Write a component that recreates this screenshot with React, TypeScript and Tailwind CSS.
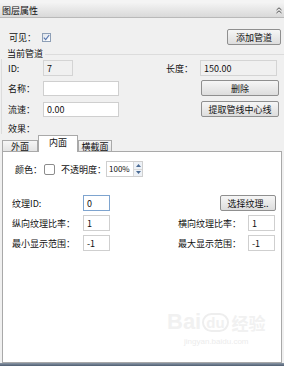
import React from 'react';

const font = { fontFamily: '"Noto Sans CJK SC", "Liberation Sans", sans-serif' };

function Btn({ label, className = '' }: { label: string; className?: string }) {
  return (
    <div
      className={`flex items-center justify-center rounded-[2px] border border-[#8f8f8f] bg-gradient-to-b from-[#f6f6f6] to-[#dddddd] text-[9px] leading-none text-[#111] ${className}`}
    >
      {label}
    </div>
  );
}

function Field({ value = '', className = '', disabled = false, focus = false }: { value?: string; className?: string; disabled?: boolean; focus?: boolean }) {
  return (
    <div
      className={`flex items-center border pl-[3px] text-[9px] leading-none text-[#111] ${
        disabled ? 'border-[#d4d4d4] bg-[#f0f0f0]' : focus ? 'border-[#7ea4cf] bg-white' : 'border-[#cfcfcf] bg-white'
      } ${className}`}
    >
      {value}
    </div>
  );
}

function Check({ checked = false, className = '' }: { checked?: boolean; className?: string }) {
  return (
    <div className={`flex items-center justify-center border border-[#8e9fb6] bg-gradient-to-br from-[#dfe4ea] to-white ${className}`}>
      {checked && (
        <svg width="7" height="7" viewBox="0 0 7 7">
          <path d="M0.8 3.6 L2.7 5.6 L6.2 1" fill="none" stroke="#5a78b0" strokeWidth="1.2" />
        </svg>
      )}
    </div>
  );
}

export default function App() {
  return (
    <div className="relative flex h-[366px] w-[284px] flex-col overflow-hidden bg-[#f0f0f0] text-[#111]" style={font}>
      {/* title bar */}
      <div className="flex h-[18px] items-center justify-between border-b border-[#b9b9b9] border-t-[3px] border-t-[#f4f4f4] bg-gradient-to-b from-[#f3f3f3] to-[#d9d9d9] pl-[2px] pr-[2px]">
        <span className="text-[9px] leading-none">图层属性</span>
        <svg width="6" height="7" viewBox="0 0 6 7">
          <path d="M0.5 3 L3 0.8 L5.5 3 M0.5 6 L3 3.8 L5.5 6" fill="none" stroke="#555" strokeWidth="1" />
        </svg>
      </div>

      {/* visible + add */}
      <div className="mt-[11px] flex h-[16px] items-center pr-[3px]">
        <span className="ml-[9px] w-[33px] text-[9px] leading-none">可见：</span>
        <Check checked className="h-[9px] w-[9px]" />
        <div className="flex-1" />
        <Btn label="添加管道" className="h-[16px] w-[54px]" />
      </div>

      {/* group label */}
      <div className="mt-[2px] flex h-[12px] items-center">
        <span className="ml-[7px] text-[9px] leading-none">当前管道</span>
        <div className="ml-[2px] mt-[2px] h-px flex-1 bg-[#dcdcdc]" />
      </div>

      <div className="ml-[1px] flex flex-col border-l border-[#dcdcdc]">
        {/* ID row */}
        <div className="mt-[1px] flex h-[16px] items-center">
          <span className="ml-[6px] w-[35px] text-[9px] leading-none">ID:</span>
          <Field value="7" disabled className="h-[16px] w-[30px]" />
          <span className="ml-[93px] w-[34px] text-[9px] leading-none">长度：</span>
          <Field value="150.00" disabled className="h-[16px] w-[77px]" />
        </div>

        {/* name row */}
        <div className="mt-[4px] flex h-[16px] items-center">
          <span className="ml-[6px] w-[35px] text-[9px] leading-none">名称：</span>
          <Field className="mt-[1px] h-[15px] w-[76px]" />
          <div className="flex-1" />
          <Btn label="删除" className="mr-[5px] h-[16px] w-[78px]" />
        </div>

        {/* speed row */}
        <div className="mt-[5px] flex h-[16px] items-center">
          <span className="ml-[6px] w-[35px] text-[9px] leading-none">流速：</span>
          <Field value="0.00" className="h-[15px] w-[76px]" />
          <div className="flex-1" />
          <Btn label="提取管线中心线" className="mr-[5px] h-[16px] w-[78px]" />
        </div>

        {/* effect */}
        <div className="mt-[5px] flex h-[12px] items-center">
          <span className="ml-[6px] text-[9px] leading-none">效果：</span>
        </div>
      </div>

      {/* tabs */}
      <div className="mt-[1px] flex h-[16px] items-end pl-[2px]">
        <div className="flex h-[11px] w-[36px] items-center justify-center border border-b-0 border-[#a9a9a9] bg-gradient-to-b from-[#f6f6f6] to-[#e4e4e4] text-[9px] leading-none">
          外面
        </div>
        <div className="relative z-10 -mb-px flex h-[17px] w-[40px] items-center justify-center border border-b-0 border-[#a9a9a9] bg-white pb-[3px] text-[9px] leading-none">
          内面
        </div>
        <div className="flex h-[11px] w-[34px] items-center justify-center border border-b-0 border-[#a9a9a9] bg-gradient-to-b from-[#f6f6f6] to-[#e4e4e4] text-[9px] leading-none">
          横截面
        </div>
      </div>

      {/* tab panel */}
      <div className="ml-[2px] mr-[2px] flex h-[212px] flex-col border border-[#a9a9a9] bg-white">
        {/* colour row */}
        <div className="mt-[9px] flex h-[16px] items-center">
          <span className="ml-[12px] w-[29px] text-[9px] leading-none">颜色：</span>
          <div className="h-[11px] w-[11px] rounded-[2px] border border-[#8c8c8c] bg-white" />
          <span className="ml-[6px] w-[45px] text-[9px] leading-none">不透明度：</span>
          <div className="flex h-[16px] w-[37px] border border-[#cfcfcf] bg-white">
            <span className="flex flex-1 items-center pl-[2px] text-[8px] leading-none">100%</span>
            <div className="flex w-[9px] flex-col border-l border-[#d8d8d8]">
              <div className="flex flex-1 items-center justify-center bg-[#eef2f7]">
                <svg width="5" height="3" viewBox="0 0 5 3">
                  <path d="M0 3 L2.5 0 L5 3 Z" fill="#4a6a94" />
                </svg>
              </div>
              <div className="flex flex-1 items-center justify-center border-t border-[#d8d8d8] bg-[#eef2f7]">
                <svg width="5" height="3" viewBox="0 0 5 3">
                  <path d="M0 0 L2.5 3 L5 0 Z" fill="#4a6a94" />
                </svg>
              </div>
            </div>
          </div>
        </div>

        {/* texture id */}
        <div className="mt-[18px] flex h-[16px] items-center">
          <span className="ml-[9px] w-[71px] text-[9px] leading-none">纹理ID:</span>
          <Field value="0" focus className="h-[16px] w-[27px]" />
          <div className="flex-1" />
          <Btn label="选择纹理.." className="mr-[5px] h-[16px] w-[56px]" />
        </div>

        {/* ratios */}
        <div className="mt-[4px] flex h-[16px] items-center">
          <span className="ml-[9px] w-[71px] text-[9px] leading-none">纵向纹理比率：</span>
          <Field value="1" className="h-[16px] w-[27px]" />
          <span className="ml-[68px] w-[70px] text-[9px] leading-none">横向纹理比率：</span>
          <Field value="1" className="h-[16px] w-[27px]" />
        </div>

        {/* ranges */}
        <div className="mt-[4px] flex h-[16px] items-center">
          <span className="ml-[9px] w-[71px] text-[9px] leading-none">最小显示范围：</span>
          <Field value="-1" className="h-[16px] w-[27px]" />
          <span className="ml-[68px] w-[70px] text-[9px] leading-none">最大显示范围：</span>
          <Field value="-1" className="h-[16px] w-[27px]" />
        </div>
      </div>

      <div className="flex-1 bg-gradient-to-b from-[#8a97a6] to-[#4f5e72]" />

      {/* watermark */}
      <div className="pointer-events-none absolute left-[167px] top-[311px] flex flex-col items-center" style={{ fontFamily: '"Liberation Sans", "Noto Sans CJK SC", sans-serif' }}>
        <div className="flex items-center text-[22px] font-bold leading-none text-[#f1f1f1]">
          <span>Bai</span>
          <span className="ml-[1px] rounded-full border-2 border-[#eeeeee] px-[2px] text-[15px]">du</span>
          <span className="ml-[3px] text-[17px]" style={font}>经验</span>
        </div>
        <div className="mt-[5px] text-[8px] leading-none text-[#ececec]">jingyan.baidu.com</div>
      </div>
    </div>
  );
}
